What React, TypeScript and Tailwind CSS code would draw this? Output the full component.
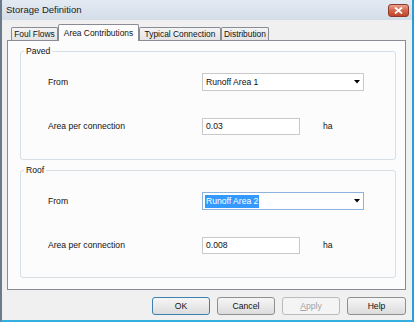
import React from "react";

function CloseButton() {
    return (
        <div className="w-[21px] h-[13px] rounded-[3px] border border-[#8c3a2b] bg-gradient-to-b from-[#e8a391] via-[#d3654c] to-[#c0442b] flex items-center justify-center">
            <svg width="9" height="7" viewBox="0 0 9 7">
                <path d="M1 0.5 L8 6.5 M8 0.5 L1 6.5" stroke="#ffffff" strokeWidth="1.8" />
            </svg>
        </div>
    );
}

function Tab({ label, width, selected }: { label: string; width: string; selected?: boolean }) {
    if (selected) {
        return (
            <div className={`${width} h-[17px] -mb-[1px] relative z-10 border border-b-0 border-[#898c95] bg-[#fcfcfc] rounded-t-[2px] flex items-start justify-center pt-[2px]`}>
                {label}
            </div>
        );
    }
    return (
        <div className={`${width} h-[13px] border border-b-0 border-[#898c95] bg-gradient-to-b from-[#f4f4f4] to-[#e3e3e3] rounded-t-[2px] flex items-center justify-center`}>
            {label}
        </div>
    );
}

function Combo({ value, focused }: { value: string; focused?: boolean }) {
    return (
        <div className={`w-[162px] h-[18px] border bg-white flex items-center justify-between pl-[2px] pr-[3px] ${focused ? "border-[#8cb3dd]" : "border-[#c9c9c9]"}`}>
            {focused ? (
                <span className="bg-[#3399ff] text-white px-[1px] leading-[13px]">{value}</span>
            ) : (
                <span className="pl-[1px]">{value}</span>
            )}
            <svg width="6" height="4" viewBox="0 0 6 4">
                <path d="M0 0 L6 0 L3 3.5 Z" fill="#000000" />
            </svg>
        </div>
    );
}

function Group({ title, from, area, focused, className }: { title: string; from: string; area: string; focused?: boolean; className: string }) {
    return (
        <fieldset className={`ml-[12px] mr-[9px] border border-[#d5dfe5] rounded-[3px] ${className}`}>
            <legend className="ml-[3px] px-[2px] leading-[11px]">{title}</legend>
            <div className="pl-[27px] flex items-center mt-[16px]">
                <span className="w-[154px]">From</span>
                <Combo value={from} focused={focused} />
            </div>
            <div className="pl-[27px] flex items-center mt-[27px]">
                <span className="w-[154px]">Area per connection</span>
                <div className="w-[98px] h-[17px] border border-[#c9c9c9] bg-white flex items-center pl-[3px]">{area}</div>
                <span className="ml-[23px]">ha</span>
            </div>
        </fieldset>
    );
}

function Button({ label, primary, disabled, width = "w-[58px]" }: { label: React.ReactNode; primary?: boolean; disabled?: boolean; width?: string }) {
    const tone = disabled
        ? "border-[#b8bcbf] bg-[#f4f4f4] text-[#a3a3a3]"
        : primary
            ? "border-[#3c7fb1] bg-gradient-to-b from-[#f6f6f6] to-[#dcdcdc]"
            : "border-[#8e8f8f] bg-gradient-to-b from-[#f6f6f6] to-[#dcdcdc]";
    return (
        <div className={`${width} h-[18px] border rounded-[3px] flex items-center justify-center ${tone}`}>
            {label}
        </div>
    );
}

export default function App() {
    return (
        <div className="w-[414px] h-[322px] flex flex-col bg-[#f0f0f0] border-l-[2px] border-l-[#6c7b8c] border-r-[2px] border-r-[#2c9bd6] border-b-[2px] border-b-[#35aee0] font-['Liberation_Sans',Arial,sans-serif] text-[8.6px] text-[#111111] overflow-hidden">
            {/* Title bar */}
            <div className="h-[20px] shrink-0 flex items-center justify-between bg-gradient-to-b from-[#e3eaf2] to-[#d3dde9] pl-[4px] pr-[3px]">
                <span className="text-[9.5px] text-[#1b1b1b]">Storage Definition</span>
                <CloseButton />
            </div>

            <div className="flex flex-col pl-[5px] pr-[6px]">
                {/* Tabs */}
                <div className="h-[20px] flex items-end pl-[4px] text-[8.4px]">
                    <Tab label="Foul Flows" width="w-[47px]" />
                    <Tab label="Area Contributions" width="w-[81px]" selected />
                    <Tab label="Typical Connection" width="w-[82px]" />
                    <Tab label="Distribution" width="w-[48px]" />
                </div>

                {/* Tab panel */}
                <div className="h-[250px] border border-[#898c95] bg-[#fcfcfc] flex flex-col">
                    <Group title="Paved" from="Runoff Area 1" area="0.03" className="mt-[5px] h-[114px]" />
                    <Group title="Roof" from="Runoff Area 2" area="0.008" focused className="mt-[5px] h-[113px]" />
                </div>

                {/* Buttons */}
                <div className="mt-[7px] flex justify-end gap-[7px]">
                    <Button label="OK" primary />
                    <Button label="Cancel" />
                    <Button label={<span><span className="underline">A</span>pply</span>} disabled />
                    <Button label="Help" width="w-[59px]" />
                </div>
            </div>
        </div>
    );
}
